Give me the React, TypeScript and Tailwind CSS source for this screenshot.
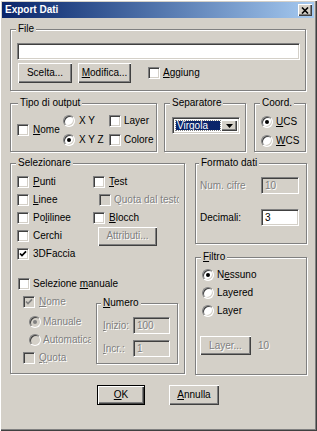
import type { ReactNode } from "react";

const sunken =
  "border border-t-[#808080] border-l-[#808080] border-r-white border-b-white shadow-[inset_1px_1px_0_#404040,inset_-1px_-1px_0_#d4d0c8]";
const raised = "shadow-[inset_1px_1px_0_#fff,inset_-1px_-1px_0_#404040,inset_-2px_-2px_0_#808080]";
const grey = "text-[#808080] [text-shadow:1px_1px_0_#fff]";

function Group({ label, className = "", labelLeft = "left-[5px]", children }: { label: ReactNode; className?: string; labelLeft?: string; children?: ReactNode }) {
  return (
    <div className={`relative shrink-0 border border-[#808080] shadow-[inset_1px_1px_0_#fff,1px_1px_0_#fff] ${className}`}>
      <span className={`absolute -top-[7px] ${labelLeft} bg-[#d4d0c8] px-[2px] leading-[12px] whitespace-nowrap`}>{label}</span>
      {children}
    </div>
  );
}

function Box({ checked = false, disabled = false }) {
  return (
    <span className={`relative block h-[12px] w-[12px] shrink-0 ${sunken} ${disabled ? "bg-[#d4d0c8]" : "bg-white"}`}>
      {checked && (
        <svg className="absolute left-[1px] top-[1px]" width="8" height="8" viewBox="0 0 8 8">
          <path d="M1 3.5 L3 5.6 L7 1.4" fill="none" stroke={disabled ? "#808080" : "#000"} strokeWidth="1.7" />
        </svg>
      )}
    </span>
  );
}

function Dot({ checked = false, disabled = false }) {
  return (
    <span
      className={`flex h-[12px] w-[12px] shrink-0 items-center justify-center rounded-full border border-t-[#808080] border-l-[#808080] border-r-white border-b-white shadow-[inset_1px_1px_0_#404040,inset_-1px_-1px_0_#d4d0c8] ${disabled ? "bg-[#d4d0c8]" : "bg-white"}`}
    >
      {checked && <span className={`h-[4px] w-[4px] rounded-full ${disabled ? "bg-[#808080]" : "bg-black"}`} />}
    </span>
  );
}

function Btn({ children, className = "", disabled = false, def = false }: { children: ReactNode; className?: string; disabled?: boolean; def?: boolean }) {
  return (
    <div className={`flex shrink-0 items-center justify-center bg-[#d4d0c8] ${raised} ${def ? "border border-black" : ""} ${disabled ? grey : ""} ${className}`}>
      {children}
    </div>
  );
}

function Field({ value = "", disabled = false, className = "" }) {
  return (
    <div className={`flex shrink-0 items-center pl-[3px] ${sunken} ${disabled ? `bg-[#d4d0c8] ${grey}` : "bg-white"} ${className}`}>{value}</div>
  );
}

const U = ({ children }: { children: ReactNode }) => <span className="underline underline-offset-1">{children}</span>;

export default function App() {
  return (
    <div className="flex h-[431px] w-[317px] flex-col bg-[#d4d0c8] p-[2px] pr-[3px] pb-[3px] font-['Liberation_Sans',Arial,sans-serif] text-[10px] leading-[12px] text-black shadow-[inset_1px_1px_0_#fff,inset_-1px_-1px_0_#404040,inset_-2px_-2px_0_#808080]">
      {/* title bar */}
      <div className="flex h-[16px] shrink-0 items-center justify-between bg-linear-to-r from-[#0a246a] to-[#a6caf0] pl-[3px] pr-[2px]">
        <span className="font-bold text-white">Export Dati</span>
        <Btn className="h-[12px] w-[14px]">
          <svg width="8" height="7" viewBox="0 0 8 7">
            <path d="M1 0.5 L7 6.5 M7 0.5 L1 6.5" stroke="#000" strokeWidth="1.6" fill="none" />
          </svg>
        </Btn>
      </div>

      <div className="flex flex-col pl-[8px] pt-[11px]">
        {/* File */}
        <Group label="File" className="h-[62px] w-[296px]">
          <div className="flex flex-col pl-[6px] pt-[13px]">
            <Field className="h-[17px] w-[283px]" />
            <div className="mt-[3px] flex items-center">
              <Btn className="ml-[1px] h-[20px] w-[54px]">Scelta...</Btn>
              <Btn className="ml-[6px] h-[20px] w-[53px]">
                <span><U>M</U>odifica...</span>
              </Btn>
              <span className="ml-[17px]"><Box /></span>
              <span className="ml-[3px]"><U>A</U>ggiung</span>
            </div>
          </div>
        </Group>

        {/* row 2 */}
        <div className="mt-[12px] flex">
          <Group label="Tipo di output" labelLeft="left-[7px]" className="h-[49px] w-[147px]">
            <div className="flex items-center pl-[6px] pt-[7px]">
              <div className="flex w-[46px] items-center gap-[4px]">
                <Box />
                <span><U>N</U>ome</span>
              </div>
              <div className="flex w-[46px] flex-col">
                <div className="flex h-[19px] items-center gap-[4px]"><Dot /><span>X Y</span></div>
                <div className="flex h-[19px] items-center gap-[4px]"><Dot checked /><span>X Y Z</span></div>
              </div>
              <div className="flex flex-col">
                <div className="flex h-[19px] items-center gap-[3px]"><Box /><span>Layer</span></div>
                <div className="flex h-[19px] items-center gap-[3px]"><Box /><span>Colore</span></div>
              </div>
            </div>
          </Group>

          <Group label="Separatore" className="ml-[7px] h-[49px] w-[82px]">
            <div className="pl-[7px] pt-[13px]">
              <div className={`flex h-[17px] w-[68px] bg-white p-[2px] ${sunken}`}>
                <div className="flex flex-1 items-center p-[1px]">
                  <div className="flex h-full flex-1 items-center bg-[#0a246a] pl-[1px] text-white outline-1 outline-dotted outline-[#808080]">Virgola</div>
                </div>
                <Btn className="h-full w-[16px]">
                  <svg width="7" height="4" viewBox="0 0 7 4">
                    <polygon points="0,0 7,0 3.5,4" fill="#000" />
                  </svg>
                </Btn>
              </div>
            </div>
          </Group>

          <Group label="Coord." className="ml-[8px] h-[49px] w-[52px]">
            <div className="flex flex-col pl-[6px] pt-[8px]">
              <div className="flex h-[19px] items-center gap-[3px]"><Dot checked /><span><U>U</U>CS</span></div>
              <div className="flex h-[19px] items-center gap-[3px]"><Dot /><span><U>W</U>CS</span></div>
            </div>
          </Group>
        </div>

        {/* row 3 */}
        <div className="mt-[11px] flex items-start">
          <Group label="Selezionare" className="h-[211px] w-[175px]">
            <div className="flex flex-col pt-[9px]">
              <div className="grid grid-cols-[76px_1fr] pl-[6px]">
                <div className="flex h-[18px] items-center gap-[4px]"><Box /><span><U>P</U>unti</span></div>
                <div className="flex h-[18px] items-center gap-[4px]"><Box /><span><U>T</U>est</span></div>

                <div className="flex h-[18px] items-center gap-[4px]"><Box /><span><U>L</U>inee</span></div>
                <div className="flex h-[18px] items-center gap-[3px] pl-[6px]">
                  <Box disabled />
                  <span className={`w-[65px] overflow-hidden whitespace-nowrap ${grey}`}>Quota dal testo</span>
                </div>

                <div className="flex h-[18px] items-center gap-[4px]"><Box /><span>Po<U>l</U>ilinee</span></div>
                <div className="flex h-[18px] items-center gap-[4px]"><Box /><span><U>B</U>locch</span></div>

                <div className="flex h-[18px] items-center gap-[4px]"><Box /><span>Cerchi</span></div>
                <div className="flex h-[18px] items-center pl-[5px]">
                  <Btn disabled className="h-[19px] w-[59px]">Attributi...</Btn>
                </div>

                <div className="flex h-[18px] items-center gap-[4px]"><Box checked /><span>3DFaccia</span></div>
                <div />
              </div>

              <div className="mt-[12px] flex h-[18px] items-center gap-[3px] pl-[7px]">
                <Box />
                <span>Selezione <U>m</U>anuale</span>
              </div>

              <div className="flex">
                <div className="flex w-[85px] flex-col pl-[12px]">
                  <div className="flex h-[18px] items-center gap-[4px]"><Box checked disabled /><span className={grey}><U>N</U>ome</span></div>
                  <div className="mt-[2px] flex h-[18px] items-center gap-[2px] pl-[6px]">
                    <Dot checked disabled />
                    <span className={grey}>Manuale</span>
                  </div>
                  <div className="flex h-[18px] items-center gap-[2px] pl-[6px]">
                    <Dot disabled />
                    <span className={`w-[48px] overflow-hidden whitespace-nowrap ${grey}`}>Automatica</span>
                  </div>
                  <div className="flex h-[18px] items-center gap-[4px]"><Box disabled /><span className={grey}><U>Q</U>uota</span></div>
                </div>

                <Group label={<span><U>N</U>umero</span>} labelLeft="left-[4px]" className="mt-[10px] h-[61px] w-[82px]">
                  <div className="flex flex-col pl-[6px] pt-[13px]">
                    <div className="flex items-center">
                      <span className={`w-[30px] ${grey}`}><U>I</U>nizio:</span>
                      <Field disabled value="100" className="h-[17px] w-[37px]" />
                    </div>
                    <div className="mt-[6px] flex items-center">
                      <span className={`w-[30px] ${grey}`}><U>I</U>ncr.:</span>
                      <Field disabled value="1" className="h-[17px] w-[37px]" />
                    </div>
                  </div>
                </Group>
              </div>
            </div>
          </Group>

          <div className="ml-[10px] flex w-[112px] flex-col">
            <Group label="Formato dati" labelLeft="left-[3px]" className="h-[81px] w-[112px]">
              <div className="flex flex-col pl-[4px] pt-[13px]">
                <div className="flex items-center">
                  <span className={`w-[61px] ${grey}`}>Num. cifre</span>
                  <Field disabled value="10" className="h-[17px] w-[38px]" />
                </div>
                <div className="mt-[15px] flex items-center">
                  <span className="w-[61px]">Decimali:</span>
                  <Field value="3" className="h-[17px] w-[38px]" />
                </div>
              </div>
            </Group>

            <Group label={<span><U>F</U>iltro</span>} labelLeft="left-[5px]" className="mt-[13px] h-[118px] w-[112px]">
              <div className="flex flex-col pt-[8px]">
                <div className="flex flex-col pl-[6px]">
                  <div className="flex h-[18px] items-center gap-[3px]"><Dot checked /><span>N<U>e</U>ssuno</span></div>
                  <div className="flex h-[18px] items-center gap-[3px]"><Dot /><span>Layered</span></div>
                  <div className="flex h-[18px] items-center gap-[3px]"><Dot /><span>Layer</span></div>
                </div>
                <div className="mt-[16px] flex items-center pl-[4px]">
                  <Btn disabled className="h-[19px] w-[51px]">Layer...</Btn>
                  <span className={`ml-[7px] ${grey}`}>10</span>
                </div>
              </div>
            </Group>
          </div>
        </div>

        {/* buttons */}
        <div className="mt-[10px] flex pl-[87px]">
          <Btn def className="h-[20px] w-[48px]"><span><U>O</U>K</span></Btn>
          <Btn className="ml-[24px] h-[20px] w-[50px]"><span><U>A</U>nnulla</span></Btn>
        </div>
      </div>
    </div>
  );
}
